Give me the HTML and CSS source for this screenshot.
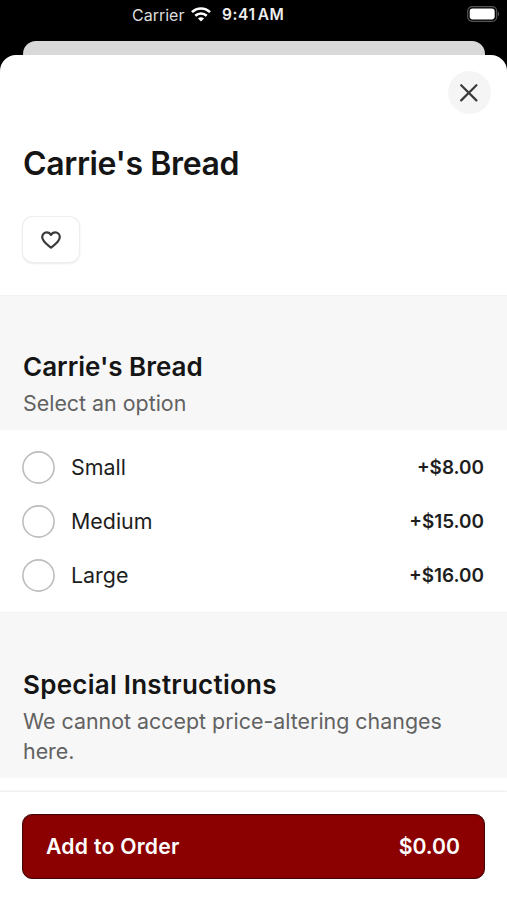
FILE: index.html
```html
<!DOCTYPE html>
<html lang="en">
<head>
<meta charset="utf-8">
<title>Carrie's Bread</title>
<link rel="stylesheet" href="styles.css">
</head>
<body>
<div class="status">
  <span class="carrier">Carrier</span>
  <svg class="wifi" width="20" height="15" viewBox="0 0 20 15" fill="none" stroke="#fff" stroke-width="2.6"><path d="M1 5.2C6 .2 14 .2 19 5.2"/><path d="M4.3 8.8C7.5 5.7 12.5 5.7 15.7 8.8"/><path d="M10 14.5l-3-3c1.7-1.6 4.3-1.6 6 0z" fill="#fff" stroke="none"/></svg>
  <span class="time">9:41 AM</span>
  <svg class="battery" width="34" height="16" viewBox="0 0 34 16"><rect x=".7" y=".7" width="29" height="14.6" rx="4.5" fill="none" stroke="#555" stroke-width="1.2"/><rect x="2.7" y="2.6" width="25" height="10.8" rx="2.8" fill="#fff"/><path d="M31 5.5q2 2.5 0 5z" fill="#666"/></svg>
</div>
<div class="back-card"></div>
<main class="sheet">
  <header class="top">
    <button class="close" aria-label="Close"><svg width="18" height="18" viewBox="0 0 18 18" stroke="#3b3b3b" stroke-width="2.2" stroke-linecap="round"><path d="M1.2 1.2l15.2 15.2M16.4 1.2L1.2 16.4"/></svg></button>
    <h1>Carrie's Bread</h1>
    <button class="fav" aria-label="Favorite"><svg width="22" height="20" viewBox="0 0 22 20" fill="none" stroke="#3a3a3a" stroke-width="2.2" stroke-linejoin="round"><path d="M11 17.7C7.5 14.9 2.2 11.7 2.2 7.1 2.2 4.3 4.2 2.3 6.7 2.3c1.8 0 3.4 1 4.3 2.6.9-1.6 2.5-2.6 4.3-2.6 2.5 0 4.5 2 4.5 4.8 0 4.6-5.3 7.8-8.8 10.6z"/></svg></button>
  </header>
  <section class="band first">
    <h2>Carrie's Bread</h2>
    <p>Select an option</p>
  </section>
  <ul class="options">
    <li><svg class="radio" width="33" height="33" viewBox="0 0 33 33"><circle cx="16.5" cy="16.5" r="15.6"/></svg><span>Small</span><b>+$8.00</b></li>
    <li><svg class="radio" width="33" height="33" viewBox="0 0 33 33"><circle cx="16.5" cy="16.5" r="15.6"/></svg><span>Medium</span><b>+$15.00</b></li>
    <li><svg class="radio" width="33" height="33" viewBox="0 0 33 33"><circle cx="16.5" cy="16.5" r="15.6"/></svg><span>Large</span><b>+$16.00</b></li>
  </ul>
  <section class="band second">
    <h2>Special Instructions</h2>
    <p>We cannot accept price-altering changes<br>here.</p>
  </section>
  <footer>
    <button class="add"><span class="label">Add to Order</span><span>$0.00</span></button>
  </footer>
</main>
</body>
</html>
```
FILE: styles.css
```css
* { box-sizing: border-box; margin: 0; padding: 0; }
body { width: 507px; height: 900px; overflow: hidden; background: #000; font-family: Inter, sans-serif; color: #1e1e1e; display: flex; flex-direction: column; }
button { border: 0; font: inherit; }
.status { height: 41px; flex: none; display: flex; align-items: flex-start; color: #fff; padding: 6px 6px 0 132px; font-size: 16px; line-height: 18px; }
.carrier { width: 54px; letter-spacing: 0; color: #ddd; }
.wifi { margin: 1px 11px 0 5px; }
.time { font-weight: 600; color: #eee; font-size: 15.5px; line-height: 18px; letter-spacing: 0.6px; word-spacing: -2.5px; }
.battery { margin-left: auto; }
.back-card { height: 14px; flex: none; margin: 0 22px 0 23px; border-radius: 13px 13px 0 0; background: #d9d9d9; }
.sheet { flex: 1; background: #fff; border-radius: 16px 16px 0 0; display: flex; flex-direction: column; }
.top { height: 240px; flex: none; padding: 16px 16px 0 22px; display: flex; flex-direction: column; align-items: flex-start; }
.close { align-self: flex-end; width: 43px; height: 43px; border-radius: 50%; background: #f5f5f5; display: grid; place-items: center; padding-right: 1px; }
h1 { font-size: 32px; line-height: 40px; font-weight: 600; margin: 30px 0 0 1px; letter-spacing: -0.36px; color: #151515; }
.fav { width: 56px; height: 45px; margin: 33px 0 0 1px; border-radius: 10px; background: #fff; box-shadow: 0 0 1px 1px #eee, 0 1px 2px 1px #ededed; display: grid; place-items: center; }
.band { background: #f7f7f7; padding-left: 23px; flex: none; border-top: 1px solid #f3f3f3; }
.first { height: 135px; padding-top: 54px; }
.second { height: 166px; padding-top: 55px; }
h2 { font-size: 26px; line-height: 34px; font-weight: 600; color: #151515; white-space: nowrap; }
.second h2 { letter-spacing: 0.25px; }
p { font-size: 21.4px; line-height: 30px; color: #626262; margin-top: 4px; white-space: nowrap; }
.options { list-style: none; height: 182px; flex: none; padding: 10px 23px 0 22px; }
.options li { height: 54px; display: flex; align-items: center; font-size: 21.4px; }
.radio { margin-right: 16px; fill: #fff; stroke: #bdbdbd; stroke-width: 1.6; }
.options b { margin-left: auto; font-size: 18.9px; font-weight: 600; }
footer { margin-top: 14px; flex: 1; box-shadow: 0 -1px 2px #e9e9e9; background: #fff; padding: 22px 22px 0; }
.add { width: 463px; height: 65px; border: 1px solid #400808; box-shadow: inset 0 0 1px #4a0808; border-radius: 10px; background: #8b0000; color: #fff; font-size: 21.2px; font-weight: 600; display: flex; justify-content: space-between; align-items: center; padding: 0 24px 1px 23px; }
.label { letter-spacing: 0.25px; }
```
